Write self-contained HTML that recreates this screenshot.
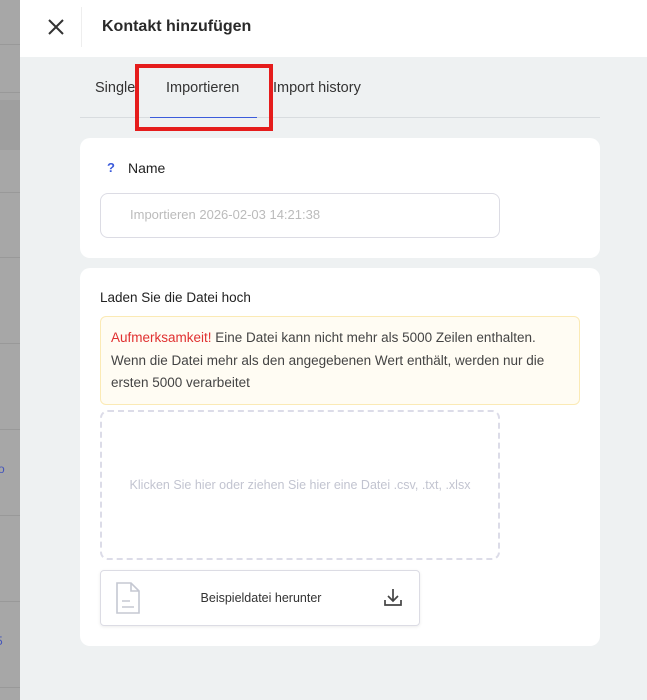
<!DOCTYPE html>
<html><head><meta charset="utf-8"><style>
*{box-sizing:border-box;margin:0;padding:0}
body{width:647px;height:700px;overflow:hidden;background:#eef1f2;font-family:"Liberation Sans",sans-serif;position:relative;color:#222}
.left{position:absolute;left:0;top:0;width:20px;height:700px;background:#a7a7a7}
.left .l{position:absolute;left:0;width:20px;height:1px;background:#999}
.hdr{position:absolute;left:20px;top:0;width:627px;height:57px;background:#fff}
.abs{position:absolute}
.card{position:absolute;left:80px;width:520px;background:#fff;border-radius:10px}
</style></head><body>
<div class="left">
<div class="l" style="top:44px"></div><div class="l" style="top:92px"></div>
<div style="position:absolute;top:100px;height:50px;width:20px;background:#9f9f9f"></div>
<div class="l" style="top:192px"></div><div class="l" style="top:257px"></div>
<div class="l" style="top:343px"></div><div class="l" style="top:429px"></div>
<div class="l" style="top:515px"></div><div class="l" style="top:601px"></div><div class="l" style="top:687px"></div>
<div style="position:absolute;top:462px;left:-2px;font-size:12px;color:#4455bb">o</div>
<div style="position:absolute;top:634px;left:-4px;font-size:12px;color:#4455bb">5</div>
</div>
<div class="hdr">
<svg class="abs" style="left:27px;top:18px" width="18" height="18" viewBox="0 0 18 18"><path d="M2 2L16 16M16 2L2 16" stroke="#333" stroke-width="2"/></svg>
<div class="abs" style="left:61px;top:7px;width:1px;height:40px;background:#eee"></div>
<div class="abs" style="left:82px;top:18px;font-size:16px;font-weight:bold;color:#2a2a2a">Kontakt hinzufügen</div>
</div>
<div class="abs" style="left:95px;top:80px;font-size:14.5px;color:#333">Single</div>
<div class="abs" style="left:166px;top:80px;font-size:14.5px;color:#333">Importieren</div>
<div class="abs" style="left:273px;top:80px;font-size:14.5px;color:#333">Import history</div>
<div class="abs" style="left:80px;top:117px;width:520px;height:1px;background:#d8dcdf"></div>
<div class="abs" style="left:150px;top:117px;width:107px;height:1px;background:#3b5bdb"></div>
<div class="abs" style="left:135px;top:64px;width:138px;height:67px;border:4px solid #e51c1c"></div>
<div class="card" style="top:138px;height:120px">
<div class="abs" style="left:27px;top:22px;font-size:13px;color:#3b5bdb;font-weight:bold">?</div>
<div class="abs" style="left:48px;top:22px;font-size:14px;color:#222">Name</div>
<div class="abs" style="left:20px;top:55px;width:400px;height:45px;border:1px solid #dcdce4;border-radius:8px"></div>
<div class="abs" style="left:50px;top:69px;font-size:13px;color:#bbb">Importieren 2026-02-03 14:21:38</div>
</div>
<div class="card" style="top:268px;height:378px">
<div class="abs" style="left:20px;top:22px;font-size:13.5px;color:#222">Laden Sie die Datei hoch</div>
<div class="abs" style="left:20px;top:48px;width:480px;height:89px;background:#fffcf3;border:1px solid #fbeab5;border-radius:6px;padding:10px 10px;font-size:13.5px;line-height:22.5px;color:#444">
<span style="color:#e03030">Aufmerksamkeit!</span> Eine Datei kann nicht mehr als 5000 Zeilen enthalten. Wenn die Datei mehr als den angegebenen Wert enthält, werden nur die ersten 5000 verarbeitet</div>
<div class="abs" style="left:20px;top:142px;width:400px;height:150px;border:2px dashed #dcdce8;border-radius:8px"></div>
<div class="abs" style="left:20px;top:210px;width:400px;text-align:center;font-size:12.5px;color:#c2c4d0">Klicken Sie hier oder ziehen Sie hier eine Datei .csv, .txt, .xlsx</div>
<div class="abs" style="left:20px;top:302px;width:320px;height:56px;border:1px solid #dcdce4;border-radius:4px;box-shadow:0 1px 3px rgba(0,0,0,.08)">
<svg class="abs" style="left:13px;top:10px" width="28" height="34" viewBox="0 0 28 34"><path d="M3 2H17L25 10V32H3Z M17 2V10H25 M8 20H16 M8 26H20" fill="none" stroke="#c5c8d2" stroke-width="1.6"/></svg>
<div class="abs" style="left:0;width:320px;top:20px;text-align:center;font-size:12.5px;color:#333">Beispieldatei herunter</div>
<svg class="abs" style="left:282px;top:16px" width="20" height="20" viewBox="0 0 20 20"><path d="M10 2V13M5 9L10 14L15 9M2 13V18H18V13" fill="none" stroke="#444" stroke-width="1.7"/></svg>
</div>
</div>
</body></html>
